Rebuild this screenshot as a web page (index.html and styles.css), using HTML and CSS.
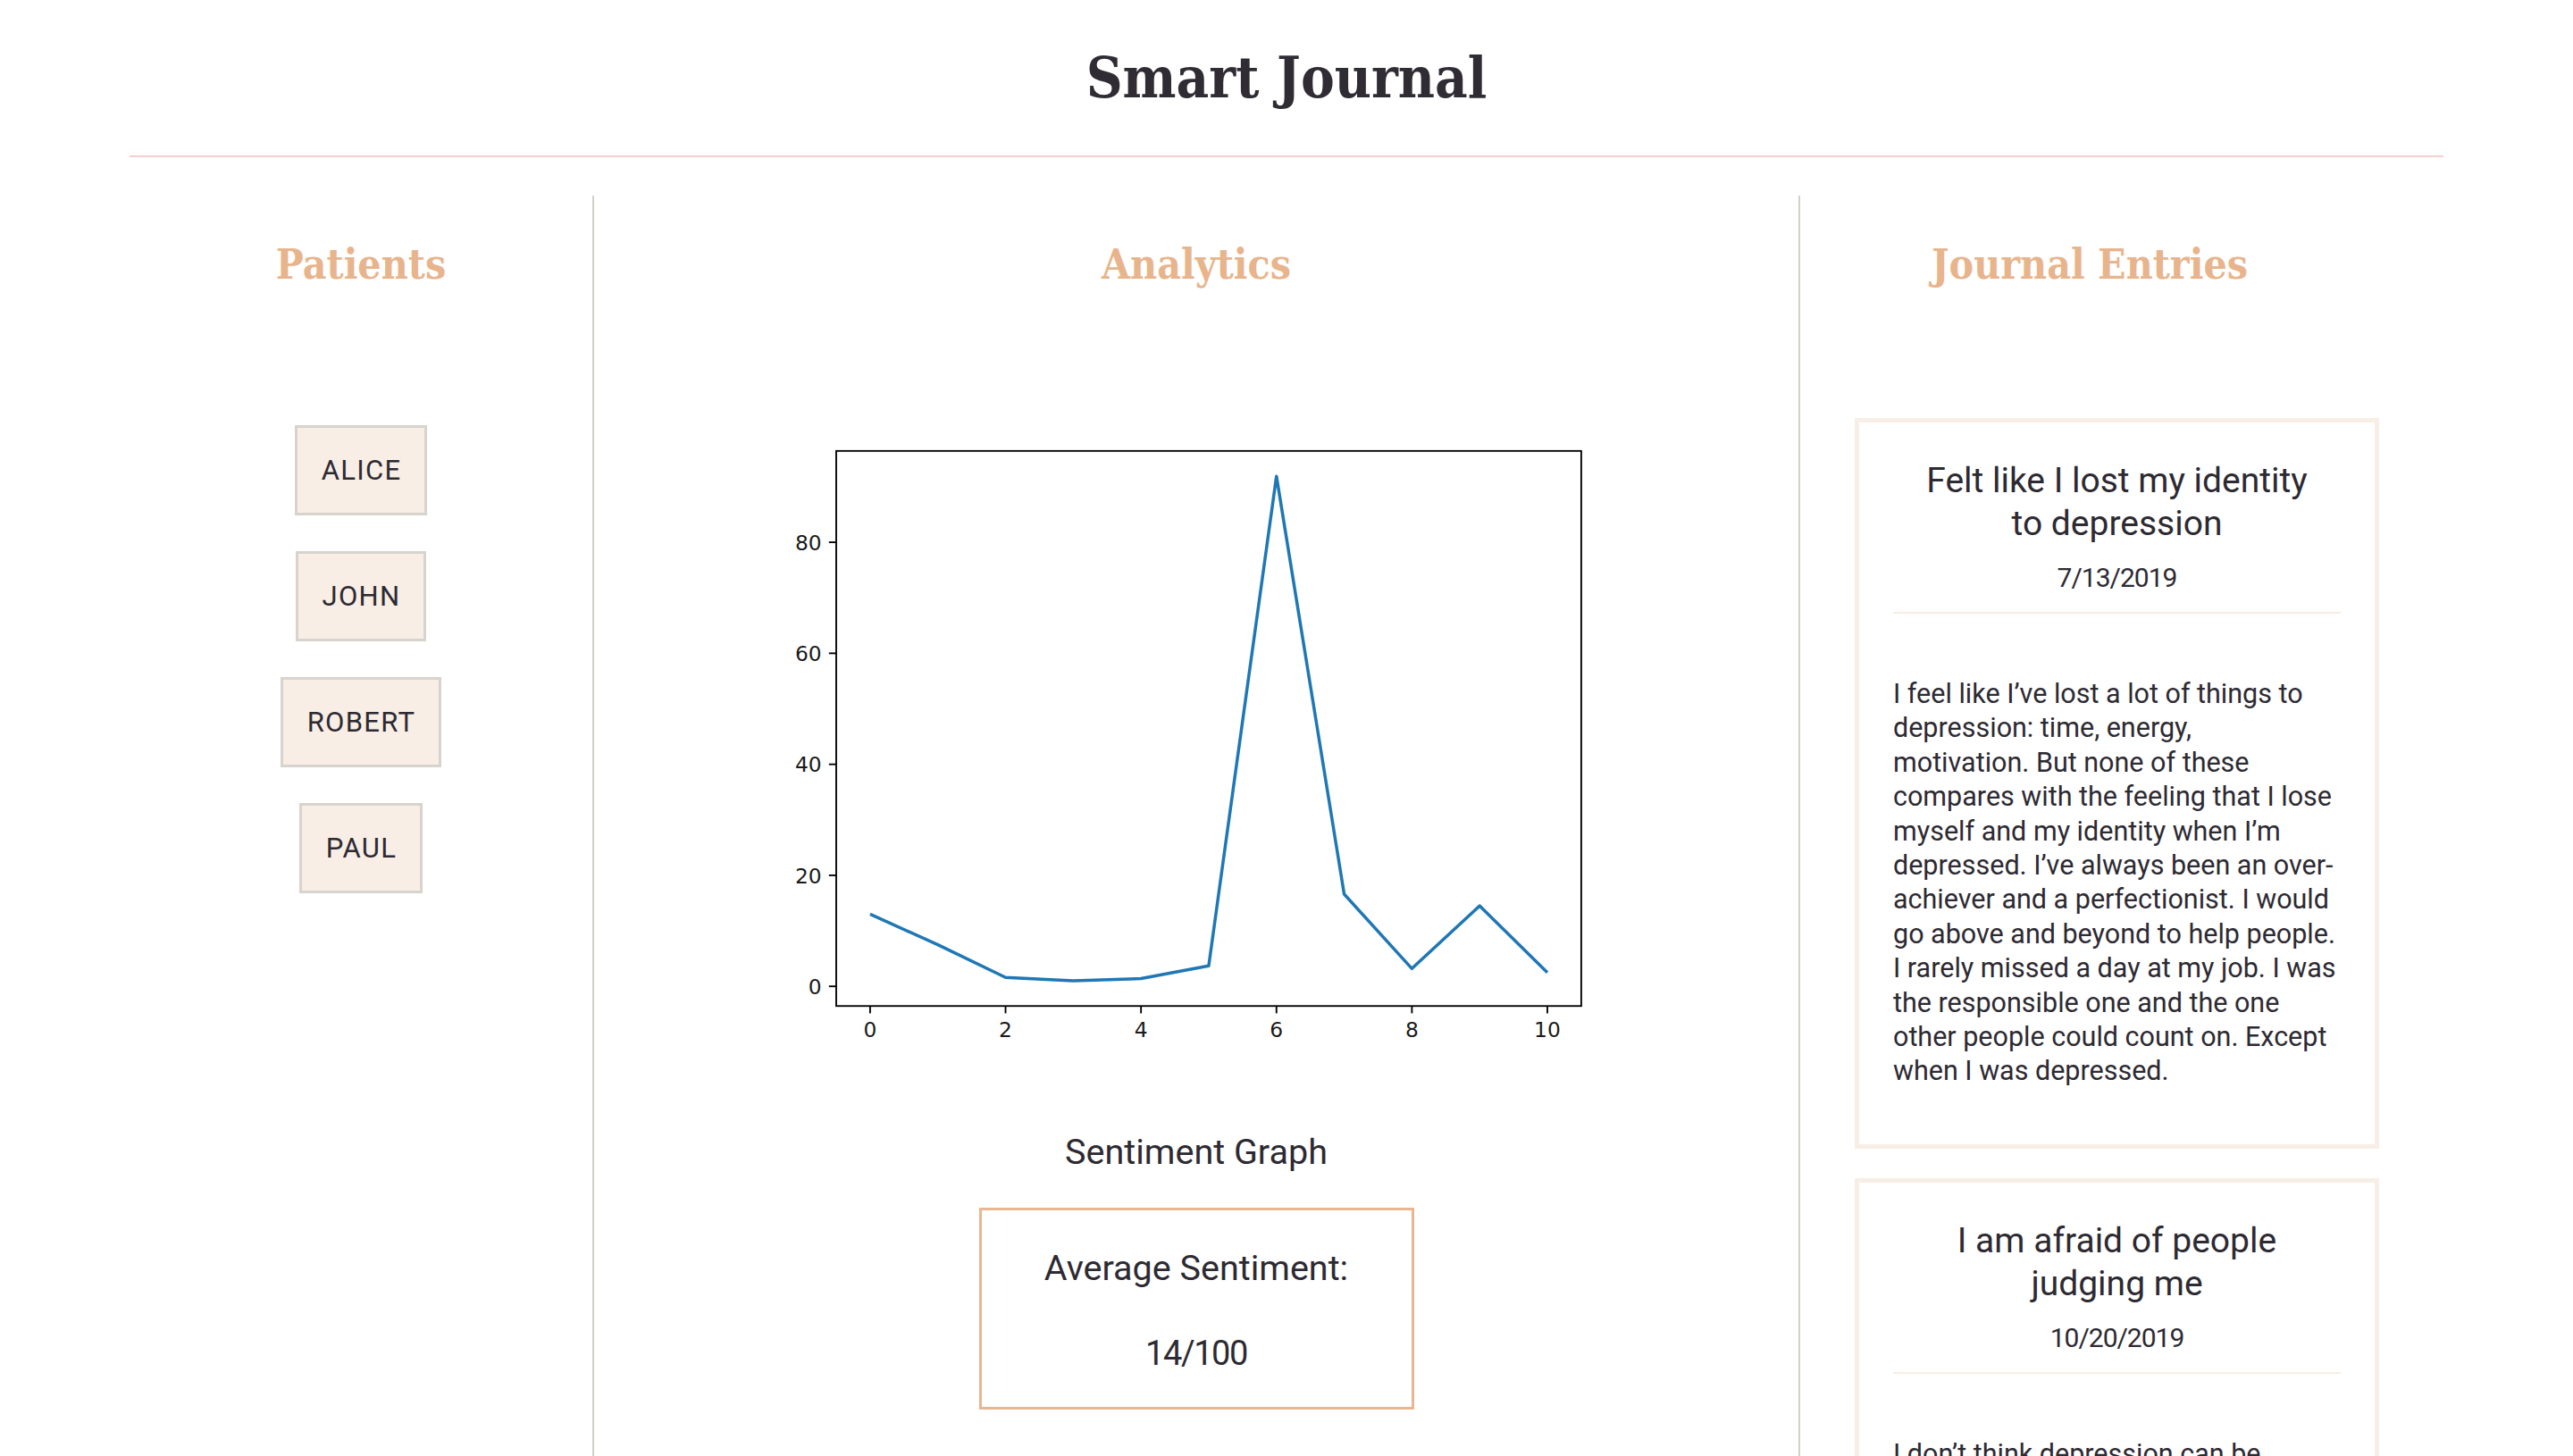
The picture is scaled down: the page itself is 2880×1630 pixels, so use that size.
FILE: index.html
```html
<!DOCTYPE html>
<html lang="en">
<head>
<meta charset="utf-8">
<title>Smart Journal</title>
<link rel="stylesheet" href="styles.css">
</head>
<body>
<header class="top">
  <h1 class="title">Smart Journal</h1>
</header>
<main class="cols">
  <section class="col col-patients">
    <h2 class="col-heading">Patients</h2>
    <div class="patient-list">
      <button class="patient">ALICE</button>
      <button class="patient">JOHN</button>
      <button class="patient">ROBERT</button>
      <button class="patient">PAUL</button>
    </div>
  </section>
  <section class="col col-analytics">
    <h2 class="col-heading">Analytics</h2>
    <svg class="chart" viewBox="0 0 640 480" width="1077" height="807">
      <rect class="spine" x="80" y="57.6" width="496" height="369.6"/>
      <g class="ticks">
        <line x1="75.14" y1="414.1" x2="80" y2="414.1"/>
        <line x1="75.14" y1="340.18" x2="80" y2="340.18"/>
        <line x1="75.14" y1="266.26" x2="80" y2="266.26"/>
        <line x1="75.14" y1="192.34" x2="80" y2="192.34"/>
        <line x1="75.14" y1="118.42" x2="80" y2="118.42"/>
        <line x1="102.55" y1="427.2" x2="102.55" y2="432.06"/>
        <line x1="192.73" y1="427.2" x2="192.73" y2="432.06"/>
        <line x1="282.91" y1="427.2" x2="282.91" y2="432.06"/>
        <line x1="373.09" y1="427.2" x2="373.09" y2="432.06"/>
        <line x1="463.27" y1="427.2" x2="463.27" y2="432.06"/>
        <line x1="553.45" y1="427.2" x2="553.45" y2="432.06"/>
      </g>
      <g class="ylabels">
        <text x="70.3" y="419.2">0</text>
        <text x="70.3" y="345.3">20</text>
        <text x="70.3" y="271.4">40</text>
        <text x="70.3" y="197.4">60</text>
        <text x="70.3" y="123.5">80</text>
      </g>
      <g class="xlabels">
        <text x="102.55" y="448">0</text>
        <text x="192.73" y="448">2</text>
        <text x="282.91" y="448">4</text>
        <text x="373.09" y="448">6</text>
        <text x="463.27" y="448">8</text>
        <text x="553.45" y="448">10</text>
      </g>
      <polyline class="series" points="102.55,366.05 147.64,386.38 192.73,408.18 237.82,410.4 282.91,408.92 328,400.42 373.09,74.44 418.18,352.74 463.27,402.27 508.36,360.51 553.45,404.86"/>
    </svg>
    <p class="chart-caption">Sentiment Graph</p>
    <div class="avg-box">
      <p class="avg-label">Average Sentiment:</p>
      <p class="avg-value">14/100</p>
    </div>
  </section>
  <section class="col col-entries">
    <h2 class="col-heading">Journal Entries</h2>
    <div class="entries">
      <article class="entry">
        <h3 class="entry-title">Felt like I lost my identity to depression</h3>
        <p class="entry-date">7/13/2019</p>
        <hr class="entry-rule">
        <p class="entry-body">I feel like I’ve lost a lot of things to<br>depression: time, energy,<br>motivation. But none of these<br>compares with the feeling that I lose<br>myself and my identity when I’m<br>depressed. I’ve always been an over-<br>achiever and a perfectionist. I would<br>go above and beyond to help people.<br>I rarely missed a day at my job. I was<br>the responsible one and the one<br>other people could count on. Except<br>when I was depressed.</p>
      </article>
      <article class="entry">
        <h3 class="entry-title">I am afraid of people judging me</h3>
        <p class="entry-date">10/20/2019</p>
        <hr class="entry-rule">
        <p class="entry-body">I don’t think depression can be<br>understood by someone who has<br>never lived through it. Whenever I<br>try to explain how I feel, I worry that<br>people will think I am weak or lazy.</p>
      </article>
    </div>
  </section>
</main>
</body>
</html>
```

FILE: styles.css
```css
html, body {
  margin: 0;
  padding: 0;
  background: #ffffff;
}

body {
  color: #2d2a32;
  font-family: Roboto, "Liberation Sans", sans-serif;
}

.top {
  margin: 0 145px;
  height: 174px;
  border-bottom: 2px solid #f2d1cc;
  display: flex;
  align-items: center;
  justify-content: center;
}

.title {
  margin: 0;
  font-family: "DejaVu Serif", serif;
  font-stretch: condensed;
  font-weight: 700;
  font-size: 63px;
  line-height: 1;
  color: #2f2c33;
}

.cols {
  display: grid;
  grid-template-columns: 518px 1350px 1fr;
  margin: 43px 145px 0;
}

.col {
  min-width: 0;
}

.col-analytics,
.col-entries {
  border-left: 2px solid #d3d0ca;
}

.col-heading {
  margin: 0;
  padding-top: 47px;
  height: 60px;
  line-height: 60px;
  text-align: center;
  font-family: "DejaVu Serif", serif;
  font-stretch: condensed;
  font-weight: 700;
  font-size: 46px;
  color: #e8b48c;
}

/* Patients */
.patient-list {
  margin-top: 150px;
  display: flex;
  flex-direction: column;
  align-items: center;
  gap: 40px;
}

.patient {
  font-family: Roboto, "Liberation Sans", sans-serif;
  font-size: 31px;
  line-height: 39px;
  letter-spacing: 1.3px;
  color: #2d2a32;
  background: #f8eee5;
  border: 3px solid #d7d4cd;
  padding: 28px 26px 28px 27px;
  margin: 0;
  cursor: pointer;
}

/* Analytics */
.chart {
  display: block;
  margin: 82px auto 0;
}

.spine {
  fill: none;
  stroke: #000;
  stroke-width: 1.11;
}

.ticks line {
  stroke: #000;
  stroke-width: 1.11;
}

.ylabels text,
.xlabels text {
  font-family: "DejaVu Sans", sans-serif;
  font-size: 13.89px;
  fill: #1a1a1a;
}

.ylabels text {
  text-anchor: end;
}

.xlabels text {
  text-anchor: middle;
}

.series {
  fill: none;
  stroke: #1f77b4;
  stroke-width: 2.08;
  stroke-linejoin: round;
}

.chart-caption {
  margin: 51px 0 0;
  text-align: center;
  font-size: 39.5px;
  line-height: 48px;
}

.avg-box {
  box-sizing: border-box;
  width: 487px;
  margin: 38px auto 0;
  border: 3px solid #e8b690;
  padding: 41px 0 36px;
  text-align: center;
}

.avg-label,
.avg-value {
  margin: 0;
  font-size: 39.5px;
  line-height: 48px;
}

.avg-value {
  margin-top: 47px;
  font-size: 38px;
  letter-spacing: -1.4px;
}

/* Journal entries */
.col-entries {
  padding-right: 72px;
}

.entries {
  margin: 142px 0 0 61px;
  display: flex;
  flex-direction: column;
  gap: 33px;
}

.entry {
  border: 5px solid #f7eee5;
  padding: 41px 38px 62px;
}

.entry-title {
  margin: 0;
  padding: 0 25px;
  text-align: center;
  font-weight: 400;
  font-size: 39px;
  line-height: 48px;
}

.entry-date {
  margin: 18px 0 0;
  text-align: center;
  font-size: 30px;
  line-height: 38px;
  letter-spacing: -1px;
}

.entry-rule {
  margin: 19px 0 0;
  border: 0;
  height: 2px;
  background: #f6ede4;
}

.entry-body {
  margin: 71px 0 0;
  font-size: 30.5px;
  line-height: 38.4px;
}
```
